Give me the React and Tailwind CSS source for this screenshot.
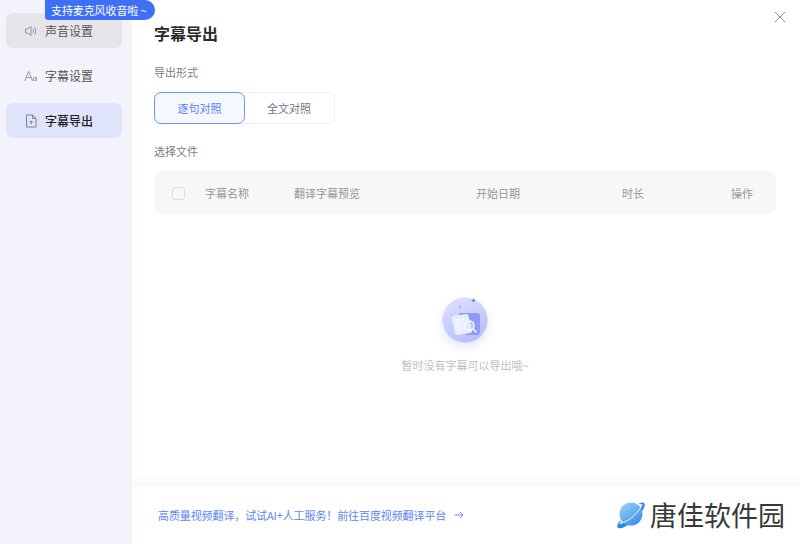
import React from 'react'

const FONT = 'font-["Noto_Sans_CJK_SC","Noto_Sans",sans-serif]'

function SpeakerIcon(){
  return (
    <svg width="14" height="14" viewBox="0 0 14 14" fill="none" stroke="#8a8a8f" strokeWidth="0.9">
      <path d="M1.500 5h2L7 2.400v9.200L3.500 9h-2z" strokeLinejoin="round" />
      <path d="M9 5.200c.7 1 .7 2.600 0 3.600M10.800 3.600c1.400 2 1.400 4.800 0 6.800" strokeLinecap="round" />
    </svg>
  )
}

function FontIcon(){
  return (
    <svg width="15" height="14" viewBox="0 0 15 14" fill="none" stroke="#8a8a8f" strokeWidth="0.9">
      <path d="M1 12 5 2l4 10M2.600 8.600h4.800" strokeLinecap="round" strokeLinejoin="round" />
      <circle cx="11.400" cy="10.200" r="1.700" />
      <path d="M13.200 8.400V12" strokeLinecap="round" />
    </svg>
  )
}

function FileIcon(){
  return (
    <svg width="12" height="14" viewBox="0 0 12 14" fill="none" stroke="#77777d" strokeWidth="0.9">
      <path d="M1.500 1h6L11 4.400V13H1.500z" strokeLinejoin="round" />
      <path d="M7.500 1v3.400H11M6.200 10.400V7M4.600 8.500l1.600-1.600 1.600 1.600" strokeLinejoin="round" />
    </svg>
  )
}

function EmptyIcon(){
  return (
    <svg width="70" height="70" viewBox="0 0 70 70" fill="none">
      <defs>
        <linearGradient id="ball" x1="0.200" y1="0" x2="0.700" y2="1">
          <stop offset="0" stopColor="#dde0fc" />
          <stop offset="1" stopColor="#b4bdfb" />
        </linearGradient>
        <radialGradient id="glow">
          <stop offset="0.600" stopColor="#d2d8fc" stopOpacity="0.500" />
          <stop offset="1" stopColor="#ffffff" stopOpacity="0" />
        </radialGradient>
      </defs>
      <circle cx="35" cy="39" r="33" fill="url(#glow)" />
      <circle cx="35" cy="35" r="22.500" fill="url(#ball)" />
      <path d="M29 29.500l.5-1.500H47q3 0 3 3v15q0 3-2 4H36z" fill="#8d9bf6" />
      <path d="M21.500 33q-.5-1.500 1-1.800L36 29q2 0 2.400 1.500l3.600 15q.4 2-1.400 2.400L27 50q-1.600 0-2-1.600z" fill="#e9ebfe" />
      <path d="M25.500 35.500l8-1.400M26.300 38.400l6.500-1.100M27 41.300l5-.9M27.700 44.200l3.500-.6" stroke="#fff" strokeWidth="1" strokeLinecap="round" />
      <circle cx="39.500" cy="40.500" r="4.600" fill="#dfe3ff" fillOpacity="0.600" stroke="#fff" strokeWidth="1.300" />
      <path d="M43 44l3 3" stroke="#fff" strokeWidth="1.600" strokeLinecap="round" />
      <path d="M43.500 13c.4 1.800.7 2.100 2.500 2.500-1.800.4-2.100.7-2.500 2.500-.4-1.800-.7-2.100-2.500-2.500 1.800-.4 2.100-.7 2.500-2.500z" fill="#6176f4" />
      <circle cx="30" cy="22" r="1.200" fill="#a3aef5" />
      <circle cx="21" cy="30" r="0.800" fill="#a3aef5" />
    </svg>
  )
}

function LogoBall(){
  return (
    <svg width="30" height="30" viewBox="0 0 30 30" fill="none">
      <defs>
        <linearGradient id="planet" x1="0.100" y1="0" x2="0.800" y2="1">
          <stop offset="0" stopColor="#9ad2f8" />
          <stop offset="1" stopColor="#3a8ce8" />
        </linearGradient>
      </defs>
      <path d="M5 19.500C2 23 .5 26 1.500 27.500c2 2.500 10-1 17-7.500S30 6 28.500 3.500C27.500 2 25 2.300 22 4c2.500-.4 3.800 0 3.300 1.800C24 10 19 15.500 14 19c-4.500 3-8 4.500-9.400 3.500-.6-.5-.3-1.500.4-3z" fill="#2f86e6" />
      <circle cx="15" cy="14" r="11.500" fill="url(#planet)" />
      <path d="M3.800 23.500C9 23 15 18.500 18.500 15S25.500 7.500 26.200 4.500" stroke="#f4f9ff" strokeWidth="1" strokeLinecap="round" />
    </svg>
  )
}

function NavItem({ icon, label, className, textClass }){
  return (
    <div className={`w-[116px] h-[35px] rounded-[7px] flex items-center pl-[18px] gap-[7px] text-[12px] ${className || ''}`}>
      <span className="w-[14px] flex justify-center">{icon}</span>
      <span className={textClass}>{label}</span>
    </div>
  )
}

export default function App(){
  return (
    <div className={`relative w-[800px] h-[544px] overflow-hidden bg-white flex ${FONT}`}>
      <aside className="w-[132px] shrink-0 bg-[#f2f3fb] px-[6px] pt-[13px] flex flex-col gap-[10px]">
        <NavItem icon={<SpeakerIcon />} label="声音设置" className="bg-[#e6e6ea]" textClass="text-[#555]" />
        <NavItem icon={<FontIcon />} label="字幕设置" textClass="text-[#555]" />
        <NavItem icon={<FileIcon />} label="字幕导出" className="bg-[#dfe4fb]" textClass="text-[#222] font-medium" />
      </aside>

      <div className="absolute left-[45px] top-0 w-[110px] h-[20px] bg-[#3f6ff6] rounded-br-[10px] rounded-tr-[10px] rounded-bl-[3px] text-white text-[11px] leading-[20px] pl-[6px] tracking-[-0.1px]">
        支持麦克风收音啦 ~
      </div>

      <main className="flex-1 flex flex-col min-w-0">
        <div className="flex-1 relative pl-[22px] pr-[24px] pt-[22px]">
          <h1 className="text-[16px] leading-[22px] font-bold text-[#2a2a2a]">字幕导出</h1>

          <div className="mt-[20px] text-[11px] leading-[16px] text-[#808080]">导出形式</div>

          <div className="mt-[12px] flex w-[181px] h-[32px] rounded-[7px] border border-[#efeff3] text-[11px]">
            <div className="-m-px w-[91px] h-[32px] rounded-[7px] border border-[#6f92f8] bg-[#f5f8ff] text-[#5a80f6] flex items-center justify-center">逐句对照</div>
            <div className="flex-1 flex items-center justify-center text-[#72768a]">全文对照</div>
          </div>

          <div className="mt-[19px] text-[11px] leading-[16px] text-[#808080]">选择文件</div>

          <div className="mt-[12px] h-[43px] pt-[1px] rounded-[8px] bg-[#f7f7f7] flex items-center text-[11px] text-[#969696]">
            <span className="ml-[18px] w-[13px] h-[13px] rounded-[3px] border border-[#dcdcdc] bg-[#f7f7f7]" />
            <span className="ml-[20px] w-[89px]">字幕名称</span>
            <span className="w-[182px]">翻译字幕预览</span>
            <span className="w-[146px]">开始日期</span>
            <span className="w-[109px]">时长</span>
            <span>操作</span>
          </div>

          <div className="mt-[71px] flex flex-col items-center">
            <EmptyIcon />
            <div className="mt-[2px] text-[11px] leading-[16px] text-[#c0c0c0]">暂时没有字幕可以导出哦~</div>
          </div>

          <button className="absolute right-[14px] top-[11px] text-[#808080]">
            <svg width="12" height="12" viewBox="0 0 12 12" fill="none" stroke="currentColor" strokeWidth="0.9">
              <path d="M1 1l10 10M11 1 1 11" />
            </svg>
          </button>
        </div>

        <div className="h-[12px] bg-gradient-to-b from-white to-[#f8f8f9]" />
        <footer className="h-[58px] bg-white flex items-center pl-[26px] pr-[15px]">
          <span className="text-[11px] text-[#5d86f6] tracking-[-0.1px]">高质量视频翻译，试试AI+人工服务！前往百度视频翻译平台</span>
          <svg className="ml-[8px]" width="10" height="8" viewBox="0 0 10 8" fill="none" stroke="#5d86f6" strokeWidth="0.9">
            <path d="M0.500 4h8.500M6 1l3 3-3 3" />
          </svg>
          <div className="ml-auto flex items-center gap-[4px]">
            <LogoBall />
            <span className="text-[27px] leading-[32px] text-[#383838]">唐佳软件园</span>
          </div>
        </footer>
      </main>
    </div>
  )
}
